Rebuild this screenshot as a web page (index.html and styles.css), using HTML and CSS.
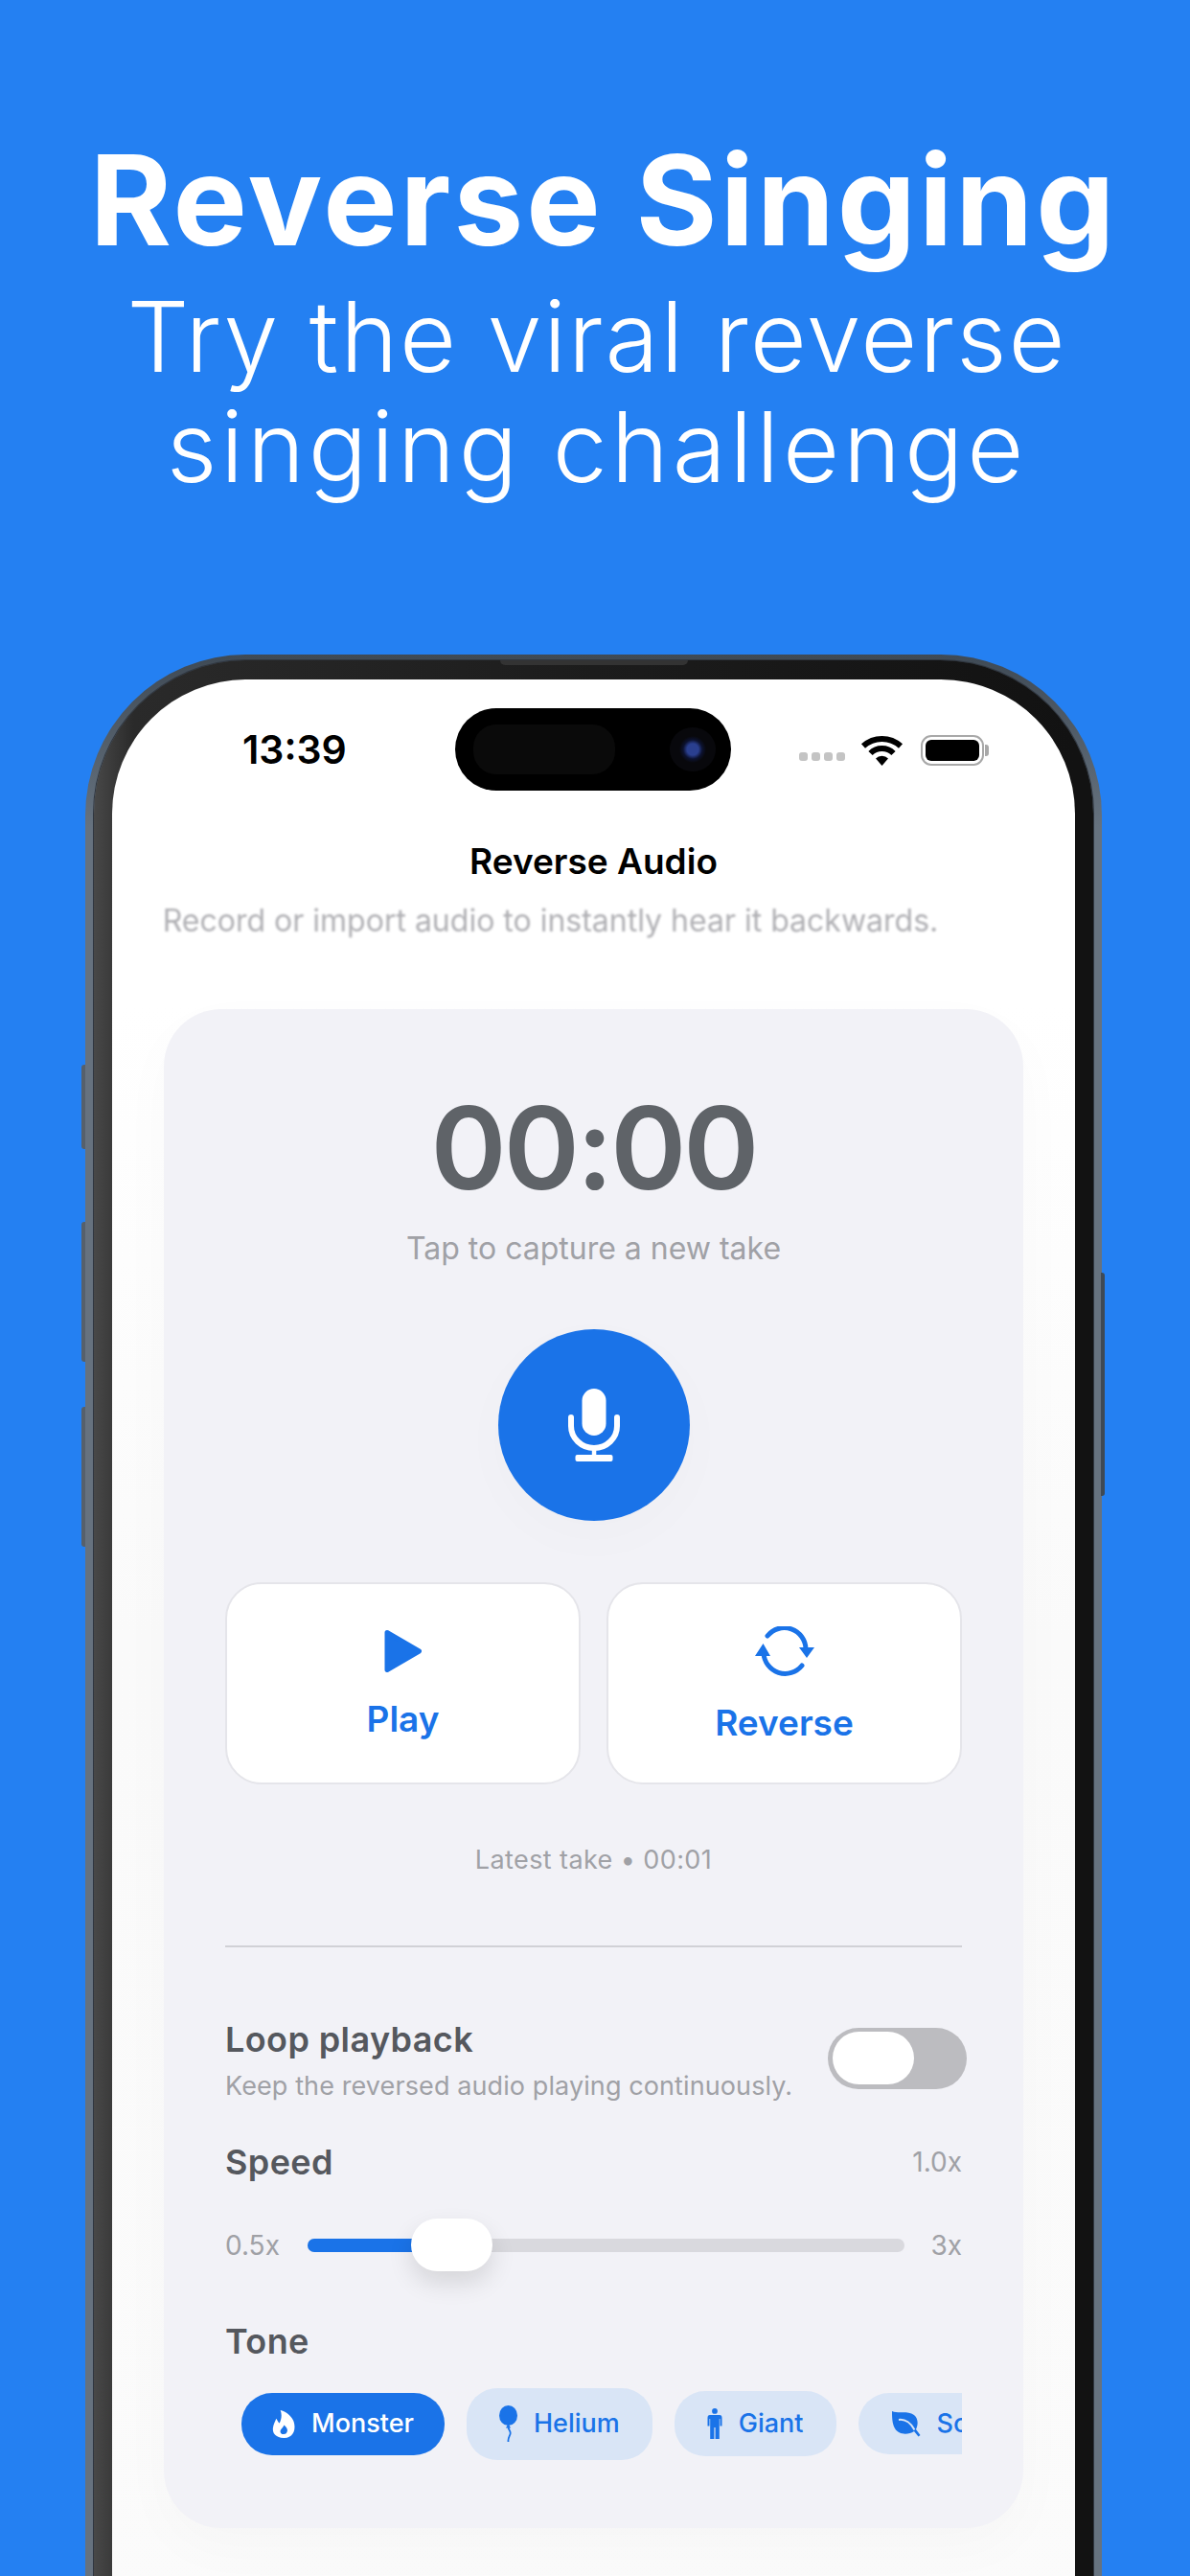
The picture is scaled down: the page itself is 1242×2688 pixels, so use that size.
FILE: index.html
```html
<!doctype html>
<html lang="en">
  <head>
    <meta charset="utf-8">
    <title>Reverse Singing</title>
    <link rel="stylesheet" href="styles.css">
  </head>
  <body>
    <header class="hero">
      <h1>Reverse Singing</h1>
      <p class="hero-line">Try the viral reverse</p>
      <p class="hero-line hero-line-wide">singing challenge</p>
    </header>

    <div class="phone">
      <span class="side side-mute"></span>
      <span class="side side-up"></span>
      <span class="side side-down"></span>
      <span class="side side-power"></span>
      <div class="bezel">
        <span class="speaker"></span>
        <div class="screen">
          <div class="island">
            <span class="island-sensor"></span>
            <span class="island-lens"></span>
          </div>

          <div class="status">
            <span class="time">13:39</span>
            <div class="status-right">
              <div class="cell"><i></i><i></i><i></i><i></i></div>
              <svg class="wifi" width="45" height="32" viewBox="0 0 45 32">
                <path d="M3 11.5A29 29 0 0 1 42 11.5M10.5 19A17 17 0 0 1 34.500 19" fill="none" stroke="#000" stroke-width="6"/>
                <path d="M16 24.500A9 9 0 0 1 29 24.500L22.500 32Z"/>
              </svg>
              <div class="battery"><span></span></div>
            </div>
          </div>

          <h2 class="title">Reverse Audio</h2>
          <p class="subtitle">Record or import audio to instantly hear it backwards.</p>

          <section class="card">
            <div class="timer">00:00</div>
            <div class="hint">Tap to capture a new take</div>

            <div class="record">
              <svg width="54" height="76" viewBox="0 0 54 76" fill="#fff">
                <rect x="14.500" y="0" width="25" height="49" rx="12.500"/>
                <path d="M3 30V39A24 23 0 0 0 51 39V30" fill="none" stroke="#fff" stroke-width="6" stroke-linecap="round"/>
                <rect x="24.800" y="60" width="4.500" height="11"/>
                <rect x="7.500" y="69" width="39" height="7" rx="2"/>
              </svg>
            </div>

            <div class="actions">
              <div class="action">
                <svg class="icon-play" width="40" height="46" viewBox="0 0 40 46">
                  <path d="M3 3.500L36.500 23L3 42.500Z" fill="#1a73e8" stroke="#1a73e8" stroke-width="5" stroke-linejoin="round"/>
                </svg>
                <span>Play</span>
              </div>
              <div class="action action-reverse">
                <svg class="icon-reverse" width="62" height="52" viewBox="0 0 62 52" fill="#1a73e8">
                  <path d="M13 10A22.500 22.500 0 0 1 53 24M49 41A22.500 22.500 0 0 1 9 28" fill="none" stroke="#1a73e8" stroke-width="5" stroke-linecap="round"/>
                  <path d="M46 22H62L54 33ZM0 31H16L8.500 18Z"/>
                </svg>
                <span>Reverse</span>
              </div>
            </div>

            <div class="latest">Latest take • 00:01</div>
            <hr class="divider">

            <div class="loop">
              <div>
                <div class="label">Loop playback</div>
                <div class="loop-note">Keep the reversed audio playing continuously.</div>
              </div>
              <div class="toggle"><span></span></div>
            </div>

            <div class="speed-head">
              <div class="label">Speed</div>
              <div class="muted">1.0x</div>
            </div>

            <div class="slider">
              <div class="muted">0.5x</div>
              <div class="track">
                <div class="track-fill"></div>
                <div class="thumb"></div>
              </div>
              <div class="muted">3x</div>
            </div>

            <div class="label tone-label">Tone</div>

            <div class="chips">
              <div class="chip chip-on">
                <svg width="25" height="29" viewBox="0 0 26 30" fill="#fff" fill-rule="evenodd">
                  <path d="M9 0C14 1 20 5 23 11C26 18 25 30 13 30C4 30 0 25 1 19C1.500 15 3 13 4.500 9C6 11 6.500 13 8 14C10 10 11 5 9 0ZM12.500 26C9.500 26 8.500 24 9 22C9.500 20 12 19 13 16C15 18 17 20 16.500 22.500C16 24.500 15 26 12.500 26Z"/>
                </svg>
                <span>Monster</span>
              </div>
              <div class="chip">
                <svg width="19" height="39" viewBox="0 0 19 39" fill="#1a73e8">
                  <ellipse cx="9.500" cy="10.500" rx="9.500" ry="10.500"/>
                  <path d="M7 23.500H12L9.500 19Z"/>
                  <path d="M9.500 23C10 26 12.500 27 11.500 30C10.500 33 9 34 9.500 38" fill="none" stroke="#1a73e8" stroke-width="1.800"/>
                </svg>
                <span>Helium</span>
              </div>
              <div class="chip">
                <svg width="16" height="32" viewBox="0 0 16 32" fill="#1a73e8">
                  <circle cx="8" cy="2.900" r="2.900"/>
                  <path d="M3 7H13C14.800 7 15.500 8 15.500 10V18.500H13.500V11H12.800V32H8.600V20H7.400V32H3.200V11H2.500V18.500H.5V10C.5 8 1.200 7 3 7Z"/>
                </svg>
                <span>Giant</span>
              </div>
              <div class="chip">
                <svg width="31" height="28" viewBox="0 0 31 28" fill="#1a73e8">
                  <path d="M1 1C8 4 17 0 24 5C29 9 28 16 26 20L30.500 26L28.500 27.500L24 22C18 26 8 26 4 19C1 14 1 6 1 1Z"/>
                  <path d="M8 10C15 9 21 14 24.500 20.500" fill="none" stroke="#d9e5f6" stroke-width="2"/>
                </svg>
                <span>Soft</span>
              </div>
            </div>
          </section>
        </div>
      </div>
    </div>
  </body>
</html>
```

FILE: styles.css
```css
*, *::before, *::after {
    box-sizing: border-box;
}

html,
body {
    margin: 0;
    height: 2688px;
    overflow: hidden;
}

body {
    background: #2480f2;
    font-family: "Inter", "Liberation Sans", sans-serif;
}

/* headline */
.hero {
    padding: 134px 0 0 4px;
    text-align: center;
    color: #fff;
}

.hero h1 {
    margin: 0 0 10px;
    padding-left: 14px;
    font-size: 130px;
    line-height: 150px;
    font-weight: 700;
    letter-spacing: 3px;
}

.hero-line {
    margin: 0;
    font-size: 102px;
    line-height: 115px;
    font-weight: 300;
    letter-spacing: 1.900px;
}

.hero-line-wide {
    letter-spacing: 3.900px;
}

/* phone */
.phone {
    position: relative;
    width: 1061px;
    margin: 159px 0 0 89px;
    padding: 6px 9px 0;
    background: linear-gradient(#3f4a55, #66727f 180px);
    border-radius: 168px 168px 0 0;
}

.side {
    position: absolute;
    width: 4px;
    background: #56606b;
}

.side-mute {
    left: -4px;
    top: 428px;
    height: 88px;
    border-radius: 3px 0 0 3px;
}

.side-up {
    left: -4px;
    top: 592px;
    height: 146px;
    border-radius: 3px 0 0 3px;
}

.side-down {
    left: -4px;
    top: 785px;
    height: 146px;
    border-radius: 3px 0 0 3px;
}

.side-power {
    right: -3px;
    top: 645px;
    height: 233px;
    background: #3f4a55;
    border-radius: 0 3px 3px 0;
}

.bezel {
    position: relative;
    padding: 20px 19px 0;
    background: linear-gradient(90deg, #484848, #2a2a2a 4%, #1c1c1c 50%, #121212 98%);
    border-radius: 160px 160px 0 0;
    box-shadow: 0 0 0 1px #2f3640;
}

.speaker {
    position: absolute;
    left: 424px;
    top: 0;
    width: 196px;
    height: 5px;
    background: #333;
    border-radius: 0 0 6px 6px;
}

.screen {
    position: relative;
    height: 2100px;
    background: linear-gradient(#fff, #fff 340px, #fafafa 1000px, #fbfbfb);
    border-radius: 140px 140px 0 0;
}

.island {
    position: absolute;
    left: 358px;
    top: 30px;
    width: 288px;
    height: 86px;
    display: flex;
    align-items: center;
    justify-content: space-between;
    padding: 0 16px 0 19px;
    background: #000;
    border-radius: 43px;
}

.island-sensor {
    width: 148px;
    height: 52px;
    background: #0a0a0a;
    border-radius: 24px;
}

.island-lens {
    width: 48px;
    height: 46px;
    background: radial-gradient(circle, #2a3f8f 0 18%, #0c1230 30%, #08080c 42%);
    border-radius: 50%;
}

/* status bar */
.status {
    display: flex;
    justify-content: space-between;
    align-items: center;
    height: 152px;
    padding: 0 95px 6px 136px;
}

.time {
    font-size: 41px;
    line-height: 48px;
    font-weight: 600;
    color: #000;
}

.status-right {
    display: flex;
    align-items: center;
    gap: 16px;
    margin-top: 2px;
}

.cell {
    display: flex;
    gap: 4px;
    margin-top: 12px;
}

.cell i {
    width: 9px;
    height: 9px;
    background: #c4c4c4;
    border-radius: 3px;
}

.battery {
    position: relative;
    width: 66px;
    height: 32px;
    padding: 3px;
    border: 2px solid #a8a8a8;
    border-radius: 11px;
    margin-left: 2px;
}

.battery span {
    display: block;
    height: 100%;
    background: #000;
    border-radius: 6px;
}

.battery::after {
    content: "";
    position: absolute;
    right: -7px;
    top: 8px;
    width: 4px;
    height: 12px;
    background: #a8a8a8;
    border-radius: 0 3px 3px 0;
}

/* app header */
.title {
    margin: 18px 0 0;
    font-size: 37px;
    line-height: 40px;
    font-weight: 600;
    text-align: center;
    color: #000;
}

.subtitle {
    margin: 20px 0 0;
    padding-right: 90px;
    font-size: 32px;
    line-height: 44px;
    text-align: center;
    color: #b0b0b4;
    filter: blur(1.200px);
}

/* main card */
.card {
    width: 897px;
    margin: 70px 0 0 54px;
    padding: 85px 64px 71px;
    background: #f2f2f7;
    border-radius: 60px;
    box-shadow: 0 20px 60px rgba(0, 0, 0, .025);
}

.timer {
    font-size: 120px;
    line-height: 120px;
    font-weight: 600;
    letter-spacing: -3px;
    text-align: center;
    color: #5f6368;
}

.hint {
    margin-top: 25px;
    font-size: 32px;
    line-height: 40px;
    text-align: center;
    color: #a0a1a6;
}

.record {
    display: flex;
    align-items: center;
    justify-content: center;
    width: 200px;
    height: 200px;
    margin: 64px auto;
    background: #1a73e8;
    border-radius: 50%;
    box-shadow: 0 16px 60px rgba(0, 0, 0, .02);
}

.actions {
    display: grid;
    grid-template-columns: 1fr 1fr;
    column-gap: 27px;
}

.action {
    display: flex;
    flex-direction: column;
    align-items: center;
    height: 211px;
    padding-top: 47px;
    background: #fff;
    border: 2px solid #e5e5ea;
    border-radius: 38px;
    font-size: 37px;
    line-height: 44px;
    font-weight: 600;
    color: #1a73e8;
}

.action svg {
    display: block;
}

.action span {
    margin-top: 26px;
}

.action-reverse {
    padding-top: 44px;
}

.action-reverse span {
    margin-top: 27px;
}

.latest {
    margin-top: 61px;
    font-size: 27px;
    line-height: 36px;
    letter-spacing: .4px;
    text-align: center;
    color: #a0a1a6;
}

.divider {
    height: 2px;
    margin: 71px 0 0;
    border: 0;
    background: #d1d1d6;
}

.label {
    font-size: 36px;
    line-height: 44px;
    font-weight: 600;
    letter-spacing: .4px;
    color: #55585e;
}

.loop {
    display: flex;
    justify-content: space-between;
    align-items: flex-start;
    margin-top: 74px;
}

.loop-note {
    margin-top: 9px;
    font-size: 27px;
    line-height: 36px;
    letter-spacing: .1px;
    color: #a0a1a6;
}

.toggle {
    width: 145px;
    height: 64px;
    margin: 10px -5px 0 0;
    padding: 4px 5px;
    background: #bcbcc0;
    border-radius: 32px;
}

.toggle span {
    display: block;
    width: 85px;
    height: 55px;
    background: #fff;
    border-radius: 28px;
}

.speed-head {
    display: flex;
    justify-content: space-between;
    align-items: center;
    margin-top: 39px;
}

.muted {
    font-size: 28px;
    line-height: 40px;
    color: #a0a1a6;
}

.slider {
    display: flex;
    align-items: center;
    gap: 29px;
    height: 55px;
    margin-top: 37px;
}

.track {
    position: relative;
    flex: 1;
    height: 14px;
    margin-right: -2px;
    background: #d9d9de;
    border-radius: 7px;
}

.track-fill {
    width: 150px;
    height: 100%;
    background: #1a73e8;
    border-radius: 7px 0 0 7px;
}

.thumb {
    position: absolute;
    left: 108px;
    top: -21px;
    width: 85px;
    height: 55px;
    background: #fff;
    border-radius: 28px;
    box-shadow: 0 12px 26px rgba(0, 0, 0, .12);
}

.tone-label {
    margin-top: 51px;
}

.chips {
    display: flex;
    align-items: center;
    gap: 23px;
    height: 76px;
    margin-top: 26px;
    padding-left: 17px;
    overflow: hidden;
}

.chip {
    display: flex;
    flex: none;
    align-items: center;
    gap: 17px;
    padding: 18px 34px;
    background: #d9e5f6;
    border-radius: 32px;
    font-size: 27px;
    line-height: 20px;
    font-weight: 500;
    color: #1a73e8;
}

.chip svg {
    display: block;
}

.chip-on {
    gap: 16px;
    padding: 18px 32px;
    background: #1a73e8;
    color: #fff;
}
```
